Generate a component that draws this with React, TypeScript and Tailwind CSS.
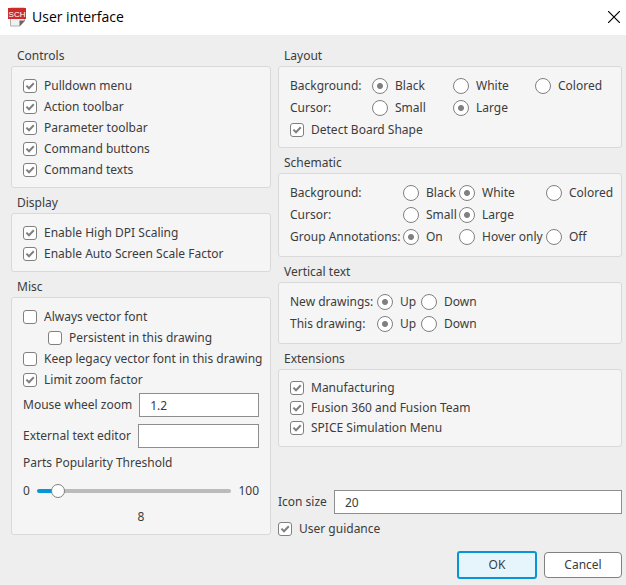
import { useId, useState, type ReactNode } from "react";

function CheckBox({ label, checked = false, className = "h-[21px]" }: { label: string; checked?: boolean; className?: string }) {
  const [on, setOn] = useState(checked);
  return (
    <label className={`flex items-center gap-[7px] ${className}`}>
      <span className="grid size-3.5 shrink-0">
        <input
          type="checkbox"
          checked={on}
          onChange={() => setOn(!on)}
          className="col-start-1 row-start-1 size-3.5 appearance-none rounded-[3px] border border-[#808080] bg-white"
        />
        {on && (
          <svg viewBox="0 0 14 14" className="pointer-events-none col-start-1 row-start-1 size-3.5" fill="none" stroke="#808080" strokeWidth="2">
            <path d="M3.4 6.6 L6 9.2 L10.8 4.2" />
          </svg>
        )}
      </span>
      <span className="whitespace-nowrap">{label}</span>
    </label>
  );
}

function RadioRow({ label, options, selected, columns }: { label: string; options: string[]; selected: string; columns: string }) {
  const name = useId();
  const [value, setValue] = useState(selected);
  return (
    <div role="radiogroup" aria-label={label} className={`grid h-[22px] items-center whitespace-nowrap ${columns}`}>
      <span>{label}</span>
      {options.map((option) => (
        <label key={option} className="flex items-center gap-[7px]">
          <input
            type="radio"
            name={name}
            checked={value === option}
            onChange={() => setValue(option)}
            className="size-4 shrink-0 appearance-none rounded-full border border-[#808080] bg-white checked:bg-[radial-gradient(circle,#808080_2.5px,#ffffff_3.5px)]"
          />
          <span>{option}</span>
        </label>
      ))}
    </div>
  );
}

function Group({ title, children, className = "pb-2" }: { title: string; children: ReactNode; className?: string }) {
  return (
    <section>
      <h2 className="flex h-[25px] items-center px-1.5 pt-1">{title}</h2>
      <div className={`rounded-[3px] border border-[#d9d9d9] bg-[#f5f5f5] px-[11px] pt-2 ${className}`}>{children}</div>
    </section>
  );
}

function TextField({ label, value = "" }: { label: string; value?: string }) {
  const id = useId();
  return (
    <div className="flex items-center gap-[7px]">
      <label htmlFor={id} className="whitespace-nowrap">{label}</label>
      <input id={id} type="text" defaultValue={value} className="h-6 min-w-0 flex-1 border border-[#8e8e8e] bg-white px-2.5" />
    </div>
  );
}

function Threshold() {
  const [value, setValue] = useState(8);
  return (
    <>
      <label htmlFor="threshold" className="mt-1 flex h-[22px] items-center">Parts Popularity Threshold</label>
      <div className="mt-2 flex h-[18px] items-center gap-[7px]">
        <span>0</span>
        <input
          id="threshold"
          type="range"
          min={0}
          max={100}
          value={value}
          onChange={(e) => setValue(Number(e.target.value))}
          style={{ backgroundImage: `linear-gradient(to right, #0696d7 ${value}%, #bbbbbb ${value}%)` }}
          className="h-1 min-w-0 flex-1 appearance-none rounded-full [&::-webkit-slider-thumb]:size-3.5 [&::-webkit-slider-thumb]:appearance-none [&::-webkit-slider-thumb]:rounded-full [&::-webkit-slider-thumb]:border [&::-webkit-slider-thumb]:border-[#808080] [&::-webkit-slider-thumb]:bg-white"
        />
        <span>100</span>
      </div>
      <output htmlFor="threshold" className="mt-2 block h-[18px] text-center leading-[18px]">{value}</output>
    </>
  );
}

export default function App() {
  const layoutColumns = "grid-cols-[82px_81px_82px_1fr]";
  const schematicColumns = "grid-cols-[113px_56px_87px_1fr]";
  const verticalColumns = "grid-cols-[87px_44px_1fr]";
  return (
    <main className="min-h-screen bg-[#eeeeee] font-['Noto_Sans','Liberation_Sans',sans-serif] text-xs leading-4 text-[#3c3c3c]">
      <header className="flex h-[35px] items-center justify-between bg-white pr-1.5 pb-0.5 pl-2 text-black">
        <div className="flex items-center gap-1.5">
          <svg viewBox="0 0 18 20" className="h-5 w-[18px]" aria-hidden="true">
            <path d="M2.5 1h14v13l-5 5h-9z" fill="#f1f1f1" stroke="#b0b0b0" />
            <path d="M17 13.5h-5.5v6z" fill="#666666" />
            <rect x="0" y="1" width="18" height="11" fill="#cf2a2a" />
            <text x="9" y="9.5" textAnchor="middle" fontSize="8" fontFamily="Liberation Sans, sans-serif" fill="#ffffff">SCH</text>
          </svg>
          <h1 className="font-['Open_Sans','Noto_Sans',sans-serif] text-sm">User interface</h1>
        </div>
        <button type="button" aria-label="Close">
          <svg viewBox="0 0 12 12" className="size-3" stroke="#000000" strokeWidth="1.2">
            <path d="M0 0L12 12M12 0L0 12" />
          </svg>
        </button>
      </header>

      <form className="pt-1.5 pr-1 pl-[11px]" onSubmit={(e) => e.preventDefault()}>
        <div className="grid grid-cols-[minmax(0,260fr)_minmax(0,344fr)] gap-[7px]">
          <div>
            <Group title="Controls" className="pb-[7px]">
              <CheckBox label="Pulldown menu" checked />
              <CheckBox label="Action toolbar" checked />
              <CheckBox label="Parameter toolbar" checked />
              <CheckBox label="Command buttons" checked />
              <CheckBox label="Command texts" checked />
            </Group>
            <Group title="Display" className="pb-[7px]">
              <CheckBox label="Enable High DPI Scaling" checked />
              <CheckBox label="Enable Auto Screen Scale Factor" checked />
            </Group>
            <Group title="Misc">
              <CheckBox label="Always vector font" />
              <CheckBox label="Persistent in this drawing" className="ml-[25px] h-[21px]" />
              <CheckBox label="Keep legacy vector font in this drawing" />
              <CheckBox label="Limit zoom factor" checked />
              <div className="flex flex-col gap-[7px] pt-[3px]">
                <TextField label="Mouse wheel zoom" value="1.2" />
                <TextField label="External text editor" />
              </div>
              <Threshold />
            </Group>
          </div>

          <div>
            <Group title="Layout" className="pb-[7px]">
              <RadioRow label="Background:" options={["Black", "White", "Colored"]} selected="Black" columns={layoutColumns} />
              <RadioRow label="Cursor:" options={["Small", "Large"]} selected="Large" columns={layoutColumns} />
              <CheckBox label="Detect Board Shape" checked />
            </Group>
            <Group title="Schematic">
              <RadioRow label="Background:" options={["Black", "White", "Colored"]} selected="White" columns={schematicColumns} />
              <RadioRow label="Cursor:" options={["Small", "Large"]} selected="Large" columns={schematicColumns} />
              <RadioRow label="Group Annotations:" options={["On", "Hover only", "Off"]} selected="On" columns={schematicColumns} />
            </Group>
            <Group title="Vertical text">
              <RadioRow label="New drawings:" options={["Up", "Down"]} selected="Up" columns={verticalColumns} />
              <RadioRow label="This drawing:" options={["Up", "Down"]} selected="Up" columns={verticalColumns} />
            </Group>
            <Group title="Extensions">
              <CheckBox label="Manufacturing" checked className="h-5" />
              <CheckBox label="Fusion 360 and Fusion Team" checked className="h-5" />
              <CheckBox label="SPICE Simulation Menu" checked className="h-5" />
            </Group>
            <div className="mt-[43px] flex flex-col gap-1">
              <TextField label="Icon size" value="20" />
              <CheckBox label="User guidance" checked />
            </div>
          </div>
        </div>
        <div className="mt-3 flex items-center justify-end gap-[7px] pb-1">
          <button type="submit" className="h-7 w-20 rounded-[3px] border-2 border-[#0696d7] bg-[#e6f4fb]">OK</button>
          <button type="button" className="h-[26px] w-[78px] rounded-[4px] border border-[#808080] bg-white">Cancel</button>
        </div>
      </form>
    </main>
  );
}
